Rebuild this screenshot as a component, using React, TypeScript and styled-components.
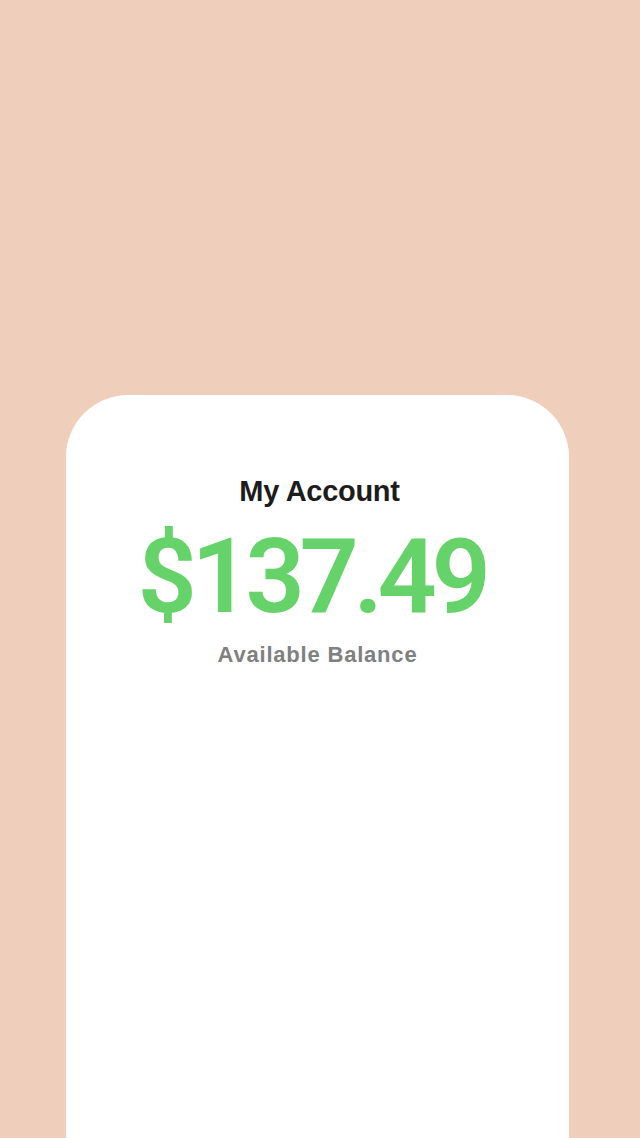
import styled, { createGlobalStyle } from "styled-components";

const GlobalStyle = createGlobalStyle`
  html, body {
    margin: 0;
    padding: 0;
    background: #efcebb;
  }
`;

const Page = styled.div`
  min-height: 1138px;
  box-sizing: border-box;
  background: #efcebb;
  padding: 395px 0 0 66px;
  display: flex;
  font-family: "Liberation Sans", Arial, sans-serif;
`;

const Card = styled.section`
  width: 503px;
  height: 743px;
  background: #ffffff;
  border-radius: 62px 62px 0 0;
  display: flex;
  flex-direction: column;
  align-items: center;
  padding-top: 82px;
  box-sizing: border-box;
`;

const Title = styled.h1`
  margin: 0 0 0 4px;
  font-size: 29px;
  line-height: 29px;
  font-weight: 700;
  letter-spacing: -0.3px;
  color: #1c1c1c;
`;

const Amount = styled.div`
  margin: 19px 12px 0 0;
  font-family: Roboto, "Liberation Sans", sans-serif;
  font-size: 104px;
  line-height: 104px;
  font-weight: 600;
  letter-spacing: -5.4px;
  color: #66d36a;
`;

const Caption = styled.p`
  margin: 15px 0 0;
  font-size: 22px;
  line-height: 22px;
  font-weight: 700;
  letter-spacing: 0.8px;
  color: #808080;
`;

export default function App() {
  return (
    <>
      <GlobalStyle />
      <Page>
        <Card>
          <Title>My Account</Title>
          <Amount>$137.49</Amount>
          <Caption>Available Balance</Caption>
        </Card>
      </Page>
    </>
  );
}
